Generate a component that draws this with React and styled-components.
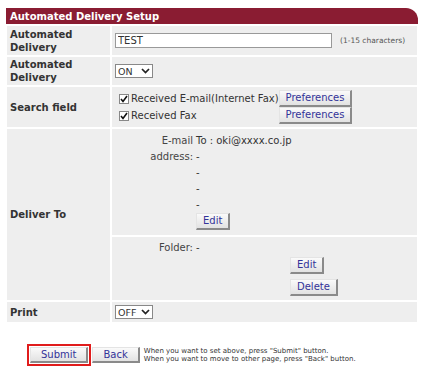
import React from 'react';
import styled, { createGlobalStyle } from 'styled-components';

const GlobalStyle = createGlobalStyle`
  body {
    margin: 0;
    background: #fff;
    font-family: "DejaVu Sans", Verdana, sans-serif;
    font-size: 10px;
    color: #333;
  }
`;

const Page = styled.div`
  width: 412px;
  padding: 8px 7px 0 6px;
`;

const Header = styled.div`
  height: 16px;
  background: #8a1c32;
  color: #fff;
  font-weight: bold;
  border-top-right-radius: 12px;
  padding-left: 4px;
  display: flex;
  align-items: center;
`;

const Grid = styled.div`
  display: grid;
  grid-template-columns: 103px 305px;
  grid-template-rows: 29px 28px 40px 171px 20px;
  gap: 2px;
  margin-top: 2px;
  padding-left: 1px;
`;

const Label = styled.div`
  background: #eee;
  font-weight: bold;
  color: #333;
  padding: 0 3px;
  line-height: 13px;
  display: flex;
  align-items: center;
`;

const Value = styled.div`
  background: #eee;
  padding: 0 3px;
  display: flex;
  align-items: center;
`;

const TextInput = styled.input`
  box-sizing: border-box;
  width: 217px;
  height: 15px;
  border: 1px solid #999;
  padding: 0 2px;
  font: inherit;
  color: #333;
  outline: none;
`;

const Hint = styled.span`
  margin-left: 8px;
  font-size: 7.5px;
  color: #555;
`;

const SelectBox = styled.div`
  box-sizing: border-box;
  min-width: 38px;
  height: 14px;
  border: 1px solid #888;
  background: #fff;
  padding: 0 2px 0 2px;
  display: flex;
  align-items: center;
  justify-content: space-between;
  gap: 3px;
  font-size: 9.5px;
`;

const Select = ({ value }) => (
  <SelectBox>
    <span>{value}</span>
    <svg width="9" height="6" viewBox="0 0 9 6">
      <path d="M1 1 L4.5 4.6 L8 1" fill="none" stroke="#222" strokeWidth="1.7" />
    </svg>
  </SelectBox>
);

const SearchGrid = styled.div`
  display: grid;
  grid-template-columns: auto auto;
  justify-content: start;
  align-items: center;
`;

const CheckItem = styled.label`
  display: flex;
  align-items: center;
`;

const Box = styled.span`
  box-sizing: border-box;
  width: 10px;
  height: 10px;
  margin: 0 2px 0 4px;
  border: 1px solid #888;
  background: #fff;
  display: flex;
  align-items: center;
  justify-content: center;
`;

const Check = ({ children }) => (
  <CheckItem>
    <Box>
      <svg width="8" height="8" viewBox="0 0 8 8">
        <path d="M1 4 L3 6.4 L7 1" fill="none" stroke="#111" strokeWidth="1.6" />
      </svg>
    </Box>
    {children}
  </CheckItem>
);

const Button = styled.button`
  box-sizing: border-box;
  height: ${p => (p.$big ? 16 : 17)}px;
  padding: 0 ${p => (p.$big ? 10 : 6)}px;
  font: inherit;
  color: #333399;
  background: linear-gradient(#fafafa, #e2e2e2);
  border-style: solid;
  border-width: 1px 2px 2px 1px;
  border-color: #e4e4e4 #8a8a8a #8a8a8a #e4e4e4;
  line-height: 1;
  cursor: pointer;
`;

const DeliverCell = styled.div`
  display: flex;
  flex-direction: column;
  gap: 2px;
  background: #fff;
`;

const SubCell = styled.div`
  background: #eee;
  display: grid;
  grid-template-columns: 81px 1fr;
  column-gap: 3px;
  align-content: start;
  line-height: 16px;
  padding: ${p => p.$top}px 0 0;
  height: ${p => p.$h}px;
  box-sizing: border-box;
  flex: ${p => (p.$grow ? 1 : 'none')};
`;

const SubLabel = styled.div`
  text-align: right;
  color: #444;
`;

const Lines = styled.div`
  display: flex;
  flex-direction: column;
  align-items: flex-start;
  color: #333;
`;

const ButtonStack = styled.div`
  display: flex;
  flex-direction: column;
  align-items: flex-start;
  gap: 5px;
  margin: 1px 0 0 94px;
`;

const Footer = styled.div`
  display: flex;
  align-items: center;
  margin-top: 22px;
  padding-left: 21px;
`;

const Highlight = styled.span`
  display: inline-flex;
  border: 2px solid #e01c1c;
  padding: 1px;
`;

const Note = styled.div`
  margin-left: 4px;
  font-size: 7px;
  line-height: 8px;
  color: #333;
`;

export default function App() {
  return (
    <>
      <GlobalStyle />
      <Page>
        <Header>Automated Delivery Setup</Header>
        <Grid>
          <Label>Automated<br />Delivery</Label>
          <Value>
            <TextInput value="TEST" readOnly />
            <Hint>(1-15 characters)</Hint>
          </Value>

          <Label>Automated<br />Delivery</Label>
          <Value>
            <Select value="ON" />
          </Value>

          <Label>Search field</Label>
          <Value>
            <SearchGrid>
              <Check>Received E-mail(Internet Fax)</Check>
              <Button>Preferences</Button>
              <Check>Received Fax</Check>
              <Button>Preferences</Button>
            </SearchGrid>
          </Value>

          <Label>Deliver To</Label>
          <DeliverCell>
            <SubCell $top={4} $h={106}>
              <SubLabel>E-mail<br />address:</SubLabel>
              <Lines>
                <span>To : oki@xxxx.co.jp</span>
                <span>-</span>
                <span>-</span>
                <span>-</span>
                <span>-</span>
                <Button>Edit</Button>
              </Lines>
            </SubCell>
            <SubCell $top={3} $grow>
              <SubLabel>Folder:</SubLabel>
              <Lines>
                <span>-</span>
              </Lines>
              <span />
              <ButtonStack>
                <Button>Edit</Button>
                <Button>Delete</Button>
              </ButtonStack>
            </SubCell>
          </DeliverCell>

          <Label>Print</Label>
          <Value>
            <Select value="OFF" />
          </Value>
        </Grid>

        <Footer>
          <Highlight>
            <Button $big>Submit</Button>
          </Highlight>
          <Button $big style={{ marginLeft: 1 }}>Back</Button>
          <Note>
            When you want to set above, press "Submit" button.<br />
            When you want to move to other page, press "Back" button.
          </Note>
        </Footer>
      </Page>
    </>
  );
}
